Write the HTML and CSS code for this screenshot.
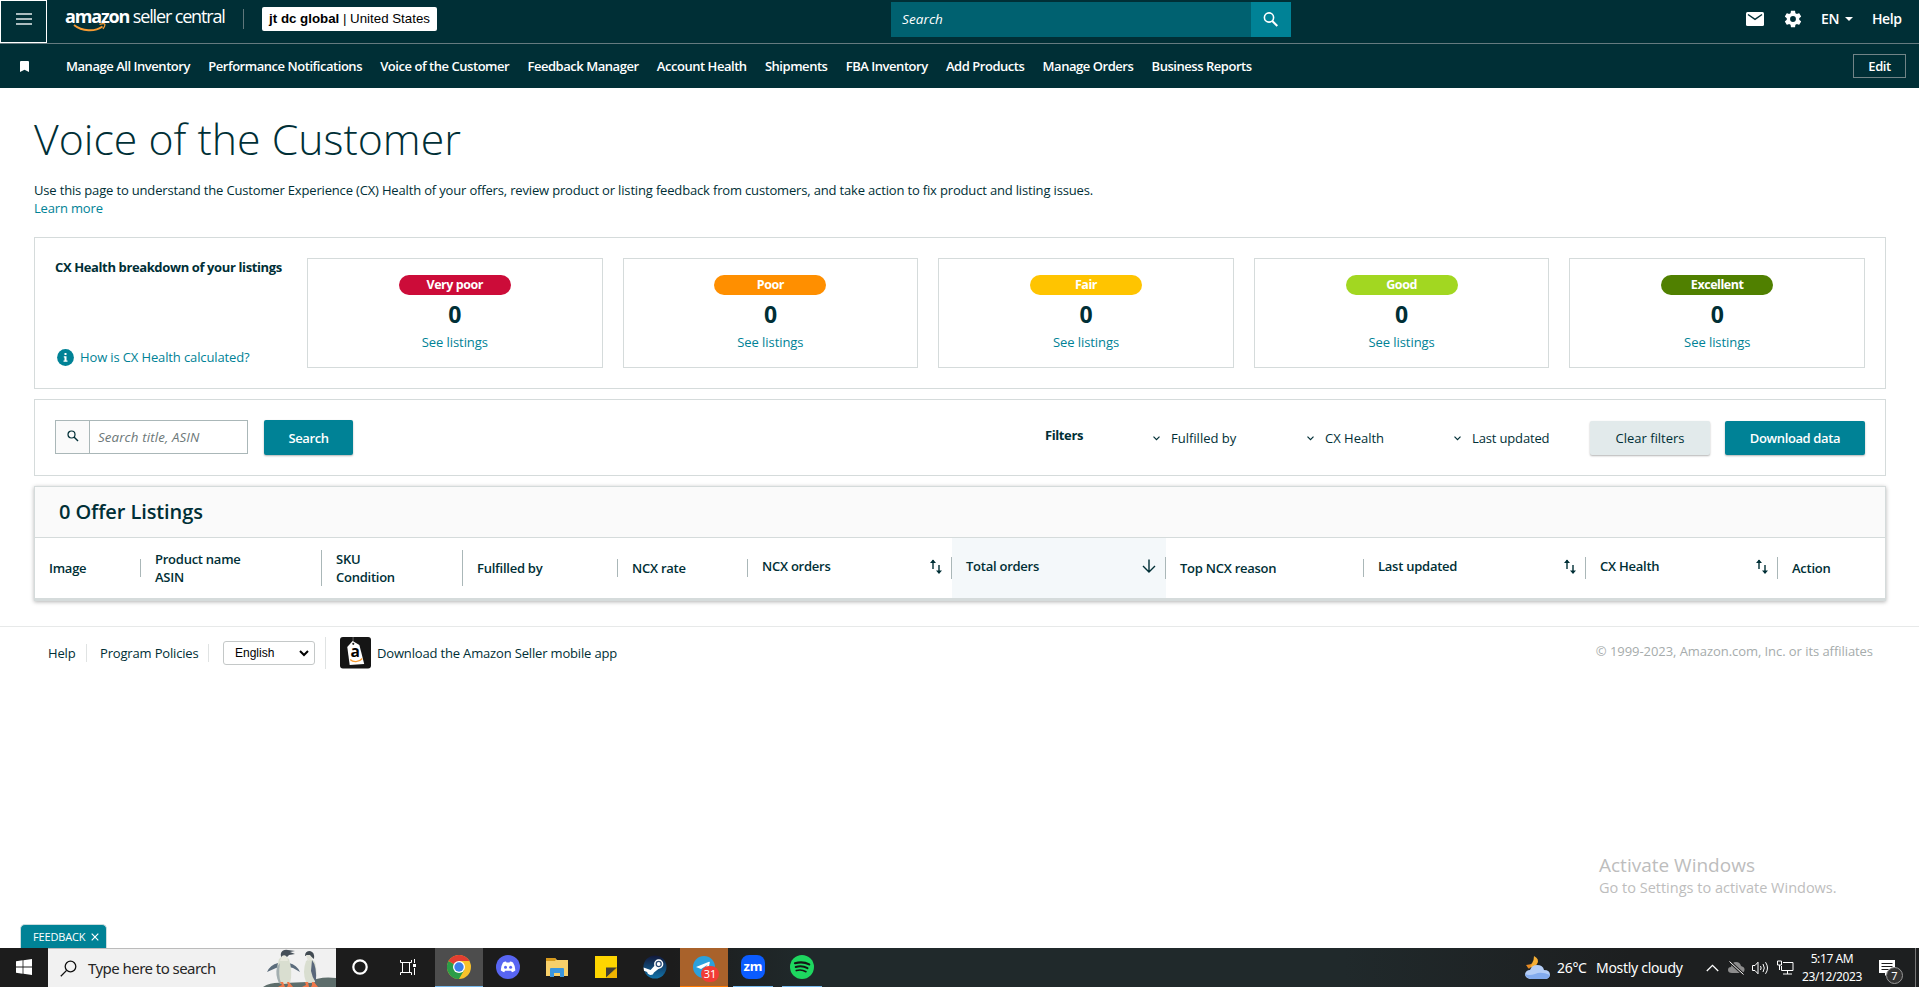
FILE: index.html
```html
<!DOCTYPE html>
<html lang="en">
<head>
    <meta charset="UTF-8">
    <meta name="viewport" content="width=device-width, initial-scale=1.0">
    <title>Voice of the Customer</title>
    <link rel="stylesheet" href="styles.css">
</head>
<body>

<header class="topbar">
    <button class="menu-btn" type="button" aria-label="Menu">
        <svg width="16" height="12" viewBox="0 0 16 12"><path d="M0 1h16M0 6h16M0 11h16" stroke="#e3eced" stroke-width="1.6"/></svg>
    </button>
    <a class="logo" href="#">
        <span class="logo-text"><b>amazon</b> <span>seller central</span></span>
        <svg class="smile" width="34" height="10" viewBox="0 0 34 10" fill="none" stroke="#f79c34">
            <path d="M1 2C9 8.500 22 9 29.500 3.500" stroke-width="1.900"/>
            <path d="M26.500 1.300c3-.8 5-.7 5.300 0s-.4 2.600-1.800 4.700" stroke-width="1.300"/>
        </svg>
    </a>
    <span class="top-sep"></span>
    <div class="store"><b>jt dc global</b> | United States</div>
    <form class="top-search">
        <div class="top-search-input">Search</div>
        <button type="button" aria-label="Search">
            <svg width="16" height="17" viewBox="0 0 16 17" fill="none" stroke="#fff"><circle cx="6" cy="6.500" r="4.600" stroke-width="1.600"/><path d="M9.300 10l5 5" stroke-width="2"/></svg>
        </button>
    </form>
    <div class="top-right">
        <svg class="mail" width="18" height="14" viewBox="0 0 18 14"><rect width="18" height="14" rx="1.500" fill="#fff"/><path d="M2 2.500l7 4.800 7-4.800" fill="none" stroke="#002f36" stroke-width="1.500"/></svg>
        <svg class="gear" width="20" height="20" viewBox="0 0 24 24" fill="#fff"><path d="M19.430 12.980c.04-.32.07-.64.07-.98s-.03-.66-.07-.98l2.110-1.650c.19-.15.24-.42.12-.64l-2-3.460c-.12-.22-.39-.3-.61-.22l-2.490 1c-.52-.4-1.080-.73-1.690-.98l-.38-2.650C14.460 2.180 14.250 2 14 2h-4c-.25 0-.46.18-.49.42l-.38 2.650c-.61.25-1.170.59-1.690.98l-2.490-1c-.23-.09-.49 0-.61.22l-2 3.460c-.13.22-.07.49.12.64l2.110 1.650c-.04.32-.07.65-.07.98s.03.66.07.98l-2.110 1.650c-.19.15-.24.42-.12.64l2 3.460c.12.22.39.3.61.22l2.490-1c.52.4 1.080.73 1.690.98l.38 2.650c.03.24.24.42.49.42h4c.25 0 .46-.18.49-.42l.38-2.650c.61-.25 1.170-.59 1.690-.98l2.490 1c.23.09.49 0 .61-.22l2-3.460c.12-.22.07-.49-.12-.64l-2.110-1.650zM12 15.500a3.500 3.500 0 1 1 0-7 3.500 3.500 0 0 1 0 7z"/></svg>
        <span class="lang">EN</span>
        <span class="caret"></span>
        <span class="help">Help</span>
    </div>
</header>

<nav class="navbar">
    <svg class="bookmark" width="9" height="11" viewBox="0 0 9 11"><path d="M0 1q0-1 1-1h7q1 0 1 1v10L4.500 8.800 0 11z" fill="#fff"/></svg>
    <a href="#">Manage All Inventory</a>
    <a href="#">Performance Notifications</a>
    <a href="#">Voice of the Customer</a>
    <a href="#">Feedback Manager</a>
    <a href="#">Account Health</a>
    <a href="#">Shipments</a>
    <a href="#">FBA Inventory</a>
    <a href="#">Add Products</a>
    <a href="#">Manage Orders</a>
    <a href="#">Business Reports</a>
    <button class="edit-btn" type="button">Edit</button>
</nav>

<main>
    <h1>Voice of the Customer</h1>
    <p class="intro">Use this page to understand the Customer Experience (CX) Health of your offers, review product or listing feedback from customers, and take action to fix product and listing issues.<br><a href="#">Learn more</a></p>

    <section class="panel health">
        <div class="health-info">
            <h4>CX Health breakdown of your listings</h4>
            <a href="#" class="how">
                <svg width="17" height="17" viewBox="0 0 17 17"><circle cx="8.500" cy="8.500" r="8.400" fill="#008296"/><path d="M7.500 4h2v2h-2zM6.800 7.200h2.700v4.300h1v1.200H6.500v-1.200h1V8.400h-.7z" fill="#fff"/></svg>
                How is CX Health calculated?
            </a>
        </div>
        <div class="cards">
            <div class="card"><span class="pill very-poor">Very poor</span><strong>0</strong><a href="#">See listings</a></div>
            <div class="card"><span class="pill poor">Poor</span><strong>0</strong><a href="#">See listings</a></div>
            <div class="card"><span class="pill fair">Fair</span><strong>0</strong><a href="#">See listings</a></div>
            <div class="card"><span class="pill good">Good</span><strong>0</strong><a href="#">See listings</a></div>
            <div class="card"><span class="pill excellent">Excellent</span><strong>0</strong><a href="#">See listings</a></div>
        </div>
    </section>

    <section class="panel filters">
        <div class="search-box">
            <span class="search-icon"><svg width="12" height="12" viewBox="0 0 12 12" fill="none" stroke="#002f36"><circle cx="4.500" cy="4.500" r="3.500" stroke-width="1.200"/><path d="M7 7l4 4" stroke-width="1.400"/></svg></span>
            <span class="search-text">Search title, ASIN</span>
        </div>
        <button class="btn search-btn" type="button">Search</button>
        <b class="filters-label">Filters</b>
        <span class="filter f1"><svg width="7" height="5" viewBox="0 0 7 5"><path d="M.5.700l3 3 3-3" fill="none" stroke="#002f36" stroke-width="1.200"/></svg>Fulfilled by</span>
        <span class="filter f2"><svg width="7" height="5" viewBox="0 0 7 5"><path d="M.5.700l3 3 3-3" fill="none" stroke="#002f36" stroke-width="1.200"/></svg>CX Health</span>
        <span class="filter f3"><svg width="7" height="5" viewBox="0 0 7 5"><path d="M.5.700l3 3 3-3" fill="none" stroke="#002f36" stroke-width="1.200"/></svg>Last updated</span>
        <button class="btn clear-btn" type="button">Clear filters</button>
        <button class="btn download-btn" type="button">Download data</button>
    </section>

    <section class="listings">
        <h2>0 Offer Listings</h2>
        <div class="columns">
            <div class="col"><span>Image</span></div>
            <div class="col"><span>Product name<br>ASIN</span></div>
            <div class="col"><span>SKU<br>Condition</span></div>
            <div class="col"><span>Fulfilled by</span></div>
            <div class="col"><span>NCX rate</span></div>
            <div class="col sort"><span>NCX orders<svg width="12" height="16" viewBox="0 0 12 16"><path d="M3 1v9M9 6v8" stroke="#002f36" stroke-width="1.400"/><path d="M0 4l3-3.500L6 4zM6 11.500l3 3.500 3-3.500z" fill="#002f36"/></svg></span></div>
            <div class="col sort active"><span>Total orders<svg width="14" height="14" viewBox="0 0 14 14"><path d="M7 .5v12M1 7l6 6 6-6" fill="none" stroke="#002f36" stroke-width="1.400"/></svg></span></div>
            <div class="col"><span>Top NCX reason</span></div>
            <div class="col sort"><span>Last updated<svg width="12" height="16" viewBox="0 0 12 16"><path d="M3 1v9M9 6v8" stroke="#002f36" stroke-width="1.400"/><path d="M0 4l3-3.500L6 4zM6 11.500l3 3.500 3-3.500z" fill="#002f36"/></svg></span></div>
            <div class="col sort"><span>CX Health<svg width="12" height="16" viewBox="0 0 12 16"><path d="M3 1v9M9 6v8" stroke="#002f36" stroke-width="1.400"/><path d="M0 4l3-3.500L6 4zM6 11.500l3 3.500 3-3.500z" fill="#002f36"/></svg></span></div>
            <div class="col last"><span>Action</span></div>
        </div>
    </section>
</main>

<footer>
    <a class="foot-help" href="#">Help</a>
    <a class="foot-policies" href="#">Program Policies</a>
    <div class="language">English<svg width="10" height="7" viewBox="0 0 10 7"><path d="M1 1l4 4 4-4" fill="none" stroke="#000" stroke-width="2"/></svg></div>
    <a class="app" href="#">
        <svg width="31" height="32" viewBox="0 0 32 32" preserveAspectRatio="none">
            <rect width="32" height="31.500" rx="3" fill="#151515"/>
            <path d="M13.500 0v6" stroke="#777" stroke-width=".8"/>
            <path d="M7.500 10l5.500-6 7 4 5 19-15 1z" fill="#fff"/>
            <circle cx="13.700" cy="6.800" r="1.100" fill="#222"/>
            <text x="10.800" y="20.500" class="tag-letter">a</text>
            <path d="M10.500 22.500c3 3 9 3 12.500-1" fill="none" stroke="#f79c34" stroke-width="1.400"/>
        </svg>
        Download the Amazon Seller mobile app
    </a>
    <span class="copyright">© 1999-2023, Amazon.com, Inc. or its affiliates</span>
</footer>

<div class="activate">
    <div class="activate-title">Activate Windows</div>
    <div class="activate-text">Go to Settings to activate Windows.</div>
</div>

<div class="feedback">FEEDBACK <svg width="8" height="8" viewBox="0 0 8 8"><path d="M.7.700l6.600 6.600M7.300.700L.7 7.300" stroke="#fff" stroke-width="1.200"/></svg></div>

<div class="taskbar">
    <span class="task start"><svg width="16" height="16" viewBox="0 0 16 16" fill="#fff"><path d="M0 2.200L6.600 1.300v6.300H0zM7.400 1.200L16 0v7.600H7.400zM0 8.400h6.600v6.300L0 13.800zM7.400 8.400H16V16l-8.600-1.200z"/></svg></span>
    <div class="win-search">
        <svg class="lens" width="17" height="17" viewBox="0 0 17 17" fill="none" stroke="#111" stroke-width="1.300"><circle cx="10.500" cy="6.500" r="5.300"/><path d="M6.600 10.400L.8 16.200"/></svg>
        <span>Type here to search</span>
        <svg class="penguins" width="73" height="38" viewBox="0 0 73 38">
            <path d="M0 38q8-5 20-4l25-1q12-6 28-4v9z" fill="#5d6d6b"/>
            <path d="M15 14q-8 2-11 9l9-4 3-1zM26 14q8 2 11 9l-7-4-4-1z" fill="#5b6c7c"/>
            <path d="M16 10q4-5 10 0 4 14 1 24-7 2-11 0-4-12 0-24z" fill="#d9ded0"/>
            <path d="M14 18q-2 8 2 16h2q-3-8-1-20z" fill="#a3aeb0"/>
            <path d="M18 4q2-4 7-3l7 1-5 1 5 2-6 1q-2 3-6 3-3-1-2-5z" fill="#454f58"/>
            <path d="M19 7q3-2 5 1l1 4h-8z" fill="#e8e9de"/>
            <path d="M43 12q5-4 9 1 3 11 0 20-6 2-9 0-4-10 0-21z" fill="#d9ded0"/>
            <path d="M49 11q5 6 4 23-4-6-5-12z" fill="#59677a"/>
            <path d="M42 7q0-5 5-5 5 1 4 8l-5-4z" fill="#424b53"/>
            <path d="M43 6h4l3 4-5 2z" fill="#e3e4da"/>
            <path d="M17 33l2 3-4 2h7l-2-5zM24 33l1 3-1 2h6l-4-5zM42 33l1 3-4 2h7l-1-5zM49 33v3l-1 2h7l-4-5z" fill="#f0784a"/>
        </svg>
    </div>
    <span class="task"><svg width="18" height="18" viewBox="0 0 18 18"><circle cx="9" cy="9" r="6.700" fill="none" stroke="#fff" stroke-width="2.200"/></svg></span>
    <span class="task view"><svg width="17" height="17" viewBox="0 0 17 17" fill="none" stroke="#fff"><path d="M.5 1v2.500h11V1M.5 16v-2.500h11V16M2.500 3.500v10M9.500 3.500v10M14.500 0v4M14.500 9v7"/><path d="M13 5h3v3h-3z" fill="#fff" stroke="none"/></svg></span>
    <span class="task chrome">
        <svg width="24" height="24" viewBox="0 0 24 24"><circle cx="12" cy="12" r="12" fill="#f9c22b"/><path d="M12 12L1.600 6A12 12 0 0 0 12 24l5.200-9z" fill="#2b9d48"/><path d="M12 12L1.600 6A12 12 0 0 1 22.400 6H12z" fill="#e23e31"/><circle cx="12" cy="12" r="6" fill="#fff"/><circle cx="12" cy="12" r="4.700" fill="#3d7eea"/></svg>
    </span>
    <span class="task"><svg width="24" height="24" viewBox="0 0 24 24"><circle cx="12" cy="12" r="12" fill="#5865f2"/><path d="M7 7.500q1.500-1 3-1l.5.900h3l.5-.9q1.500 0 3 1 2.500 4 2.300 8-1.500 1.300-3.300 1.700l-.9-1.500h-6l-.9 1.500q-1.800-.4-3.300-1.700-.2-4 2.100-8z" fill="#fff"/><circle cx="9.500" cy="12.200" r="1.500" fill="#5865f2"/><circle cx="14.600" cy="12.200" r="1.500" fill="#5865f2"/></svg></span>
    <span class="task"><svg width="22" height="19" viewBox="0 0 22 19"><path d="M0 0h9l2 2h11v16H0z" fill="#f8d06a"/><path d="M0 0h9l1 1.500-1 1.500H0z" fill="#d79a1c"/><path d="M4 19v-8q0-1 1-1h12q1 0 1 1v8h-4v-4H8v4z" fill="#3b96dd"/></svg></span>
    <span class="task"><svg width="22" height="22" viewBox="0 0 22 22"><path d="M0 0h22v11.500L11.500 22H0z" fill="#fed500"/><path d="M11 11.500h11L11 21.500z" fill="#423e35"/><path d="M22 11.500V22H11z" fill="#f0b400"/></svg></span>
    <span class="task"><svg width="24" height="24" viewBox="0 0 24 24"><defs><linearGradient id="steam" x1="0" y1="0" x2="0" y2="1"><stop offset="0" stop-color="#12183a"/><stop offset="1" stop-color="#1272a8"/></linearGradient></defs><circle cx="12" cy="12" r="11.500" fill="url(#steam)"/><path d="M.6 12.500l7 2.600 5-5.600 4 3.500-5.600 4.400q-1 3-4.400 2.400-2.200-.6-2.500-2.800L1 15.700z" fill="#fff"/><circle cx="15.700" cy="9" r="3.900" fill="#284a75" stroke="#fff" stroke-width="1.500"/><circle cx="15.700" cy="9" r="1.900" fill="#fff"/></svg></span>
    <span class="task telegram">
        <svg width="22" height="22" viewBox="0 0 22 22"><circle cx="11" cy="11" r="11" fill="#2ba0dc"/><path d="M3 11l13-5.200q1-.2.800.8L14.500 17 10 13.800l5-5.300-7 4.600z" fill="#fff"/></svg>
        <span class="badge">31</span>
    </span>
    <span class="task zoom"><span class="zoom-icon">zm</span></span>
    <span class="task spotify"><svg width="24" height="24" viewBox="0 0 24 24" fill="none" stroke="#151515" stroke-linecap="round"><circle cx="12" cy="12" r="12" fill="#1ed760" stroke="none"/><path d="M5 8.200q8-2.200 14.200 1.200" stroke-width="2.200"/><path d="M5.700 12q6.500-1.800 11.800 1.200" stroke-width="1.900"/><path d="M6.300 15.600q5.200-1.500 9.700 1.100" stroke-width="1.600"/></svg></span>
    <div class="tray">
        <svg class="weather" width="25" height="24" viewBox="0 0 25 24"><path d="M9 0q6 3 3 8-3 5-10 3Q9 8 9 0z" fill="#f5ae35"/><path d="M1 9l6-1-3 5z" fill="#e88b24"/><path d="M5 23q-5-1-5-5 1-4 5-4 2-5 7-5 6 0 7 5 6 0 6 5-1 4-5 4z" fill="#b4cdf6"/><path d="M3 22q-3-2-3-4 4 2 10 0 6-3 15 1-1 4-5 4H6z" fill="#83abed"/></svg>
        <span class="temp">26°C</span>
        <span class="sky">Mostly cloudy</span>
        <svg class="up" width="13" height="8" viewBox="0 0 13 8"><path d="M.8 7L6.500 1.300 12.200 7" fill="none" stroke="#fff" stroke-width="1.300"/></svg>
        <svg class="cloud" width="17" height="14" viewBox="0 0 17 14"><path d="M4 12q-4 0-4-3 0-3 3-3 1-5 5-5 4 0 5 4 4 1 3.500 4-.5 3-3.500 3z" fill="#8c8c8c"/><path d="M1.500.5l14 13" stroke="#1d1d1d" stroke-width="3"/><path d="M1.500.5l14 13" stroke="#fff"/></svg>
        <svg class="sound" width="17" height="14" viewBox="0 0 17 14" fill="none" stroke="#fff"><path d="M.5 4.500h2.500l3-3.300v11.600l-3-3.300H.5zM8.500 5q1.300 2 0 4M11 3q2.600 4 0 8M13.500 1.200q4 5.800 0 11.600"/></svg>
        <svg class="network" width="17" height="15" viewBox="0 0 17 15" fill="none" stroke="#fff"><path d="M6 2.500h10v8H4.500V6M10.500 10.500v3.500M6 14h9M.5 1h4v4h-4zM2.500 5v5"/></svg>
        <div class="clock">5:17 AM<br>23/12/2023</div>
        <div class="notes">
            <svg width="16" height="16" viewBox="0 0 16 16"><path d="M0 0h16v13H9l-3 3v-3H0z" fill="#fff"/><path d="M2.500 3.500h11M2.500 6.500h11M2.500 9.500h7" stroke="#1d1d1d"/></svg>
            <span class="notes-count">7</span>
        </div>
        <span class="desktop-edge"></span>
    </div>
</div>

</body>
</html>
```
FILE: styles.css
```css
* {
    box-sizing: border-box;
}

body {
    margin: 0;
    height: 987px;
    display: flex;
    flex-direction: column;
    overflow: hidden;
    background-color: #fff;
    color: #002f36;
    font-family: "Open Sans", "Noto Sans", sans-serif;
    font-size: 13px;
    letter-spacing: -0.165px;
    line-height: 18px;
    white-space: nowrap;
}

a {
    color: #008296;
    text-decoration: none;
}

button {
    font: inherit;
    letter-spacing: inherit;
    padding: 0;
    cursor: pointer;
}

svg {
    display: block;
    flex: none;
}

/* top bar */
.topbar {
    display: flex;
    flex: none;
    align-items: flex-start;
    height: 44px;
    background-color: #002f36;
    border-bottom: 1px solid #667b80;
    color: #fff;
}

.menu-btn {
    width: 47px;
    height: 43px;
    display: flex;
    align-items: center;
    justify-content: center;
    padding-bottom: 5px;
    background: none;
    border: 1px solid #fff;
}

.logo {
    margin: 4px 0 0 18px;
    width: 160px;
    height: 30px;
    color: #fff;
}

.logo-text {
    display: block;
    font-size: 18px;
    line-height: 24px;
    letter-spacing: -1.15px;
}

.smile {
    margin: -5px 0 0 8px;
}

.top-sep {
    width: 1px;
    height: 20px;
    margin: 9px 18px 0 18px;
    background-color: #5f777b;
}

.store {
    width: 175px;
    height: 24px;
    margin-top: 7px;
    background-color: #fff;
    border-radius: 2px;
    color: #000;
    font-family: "Liberation Sans", Arial, sans-serif;
    font-size: 13.3px;
    letter-spacing: 0;
    line-height: 24px;
    text-align: center;
}

.top-search {
    display: flex;
    width: 400px;
    height: 35px;
    margin: 2px 0 0 454px;
}

.top-search-input {
    flex: 1;
    padding-left: 11px;
    background-color: #006170;
    font-size: 13.5px;
    font-style: italic;
    letter-spacing: 0.1px;
    line-height: 34px;
}

.top-search button {
    width: 40px;
    display: flex;
    align-items: center;
    justify-content: center;
    background-color: #008296;
    border: none;
}

.top-right {
    display: flex;
    align-items: center;
    height: 38px;
    margin-left: auto;
    font-weight: 600;
    font-size: 14px;
    letter-spacing: -0.4px;
}

.gear {
    margin: 0 18px 0 19px;
}

.lang {
    width: 18px;
}

.caret {
    margin: 0 19px 0 6px;
    border: 4px solid transparent;
    border-top-color: #fff;
    border-bottom: none;
}

.help {
    width: 47px;
}

.navbar {
    display: flex;
    flex: none;
    align-items: center;
    height: 44px;
    padding: 0 13px 0 20px;
    background-color: #002f36;
    color: #fff;
    font-weight: 600;
    letter-spacing: -0.46px;
}

.navbar a {
    margin-right: 18.2px;
    color: #fff;
}

.bookmark {
    margin-right: 37px;
}

.edit-btn {
    width: 53px;
    height: 24px;
    margin-left: auto;
    background: none;
    border: 1px solid #728487;
    color: #fff;
}

/* page */
main {
    padding: 0 33px 0 34px;
}

h1 {
    margin: 21px 0 0;
    font-size: 42.8px;
    font-weight: 300;
    letter-spacing: 0;
    line-height: 60px;
}

.intro {
    margin: 12px 0 20px;
}

.panel {
    display: flex;
    border: 1px solid #d5dbdb;
    margin-bottom: 10px;
}

.health {
    height: 152px;
    padding: 20px;
}

.health-info {
    width: 252px;
    display: flex;
    flex-direction: column;
    justify-content: space-between;
    padding-bottom: 2px;
}

.health-info h4 {
    margin: 0;
    font-size: 13px;
    font-weight: 700;
    letter-spacing: -0.38px;
}

.how {
    display: flex;
    align-items: center;
    gap: 6px;
    margin-left: 2px;
    letter-spacing: -0.13px;
}

.cards {
    flex: 1;
    display: grid;
    grid-template-columns: repeat(5, 1fr);
    gap: 20px;
}

.card {
    display: flex;
    flex-direction: column;
    align-items: center;
    border: 1px solid #d5dbdb;
    padding-top: 16px;
}

.card strong {
    margin: 5px 0 5px;
    font-size: 23px;
    line-height: 28px;
}

.card a {
    letter-spacing: -0.07px;
}

.pill {
    width: 112px;
    height: 20px;
    border-radius: 10px;
    color: #fff;
    font-size: 12.5px;
    font-weight: 700;
    letter-spacing: -0.45px;
    line-height: 19px;
    text-align: center;
}

.very-poor { background-color: #cc0c39; }
.poor { background-color: #ff8f00; }
.fair { background-color: #ffc400; }
.good { background-color: #a2d721; }
.excellent { background-color: #508000; }

.filters {
    height: 77px;
    padding: 20px 20px 0 20px;
}

.search-box {
    display: flex;
    width: 193px;
    height: 34px;
    border: 1px solid #aab7b8;
}

.search-icon {
    width: 34px;
    padding: 9px 0 0 11px;
    background-color: #fafafa;
    border-right: 1px solid #aab7b8;
}

.search-text {
    padding-left: 8px;
    color: #6c7778;
    font-size: 13.3px;
    font-style: italic;
    letter-spacing: 0.13px;
    line-height: 33px;
}

.btn {
    height: 35px;
    border: none;
    border-radius: 2px;
    background-color: #008296;
    box-shadow: 0 1px 2px rgba(0, 0, 0, 0.3);
    color: #fff;
    font-weight: 600;
    letter-spacing: -0.38px;
}

.search-btn {
    width: 89px;
    margin-left: 16px;
}

.filters-label {
    margin: 6px 0 0 auto;
    width: 108px;
    letter-spacing: -0.4px;
}

.filter {
    display: flex;
    align-items: center;
    gap: 11px;
    height: 36px;
    letter-spacing: 0;
}

.f1 { width: 154px; }
.f2 { width: 147px; }
.f3 { width: 136px; letter-spacing: -0.15px; }

.clear-btn {
    width: 120px;
    margin: 0 15px 0 0;
    background-color: #e2eaeb;
    color: #002f36;
    font-weight: 400;
    letter-spacing: 0;
}

.clear-btn,
.download-btn {
    margin-top: 1px;
    height: 34px;
}

.download-btn {
    width: 140px;
}

/* listings table */
.listings {
    height: 115px;
    border: 1px solid #d5dbdb;
    border-bottom-width: 3px;
    box-shadow: 0 1px 4px rgba(0, 0, 0, 0.3);
}

.listings h2 {
    height: 51px;
    margin: 0;
    padding-left: 24px;
    background-color: #fafafa;
    border-bottom: 1px solid #d5dbdb;
    font-size: 20px;
    font-weight: 600;
    letter-spacing: -0.1px;
    line-height: 50px;
}

.columns {
    display: grid;
    grid-template-columns: 106px 181px 141px 155px 130px 204px 214px 198px 222px 192px 1fr;
    height: 60px;
    font-weight: 600;
    letter-spacing: -0.25px;
}

.col {
    display: flex;
    align-items: center;
    padding-left: 14px;
}

.col span {
    flex: 1;
    border-right: 1px solid #aab7b8;
}

.sort span {
    display: flex;
    justify-content: space-between;
    height: 22px;
    padding-right: 9px;
}

.sort svg {
    margin-top: 2px;
}

.active {
    background-color: #f4f8fa;
}

.last span {
    border: none;
}

/* footer */
footer {
    display: flex;
    flex: none;
    align-items: center;
    height: 54px;
    margin-top: 25px;
    padding: 0 46px 1px 48px;
    border-top: 1px solid #e7e9e9;
}

footer a {
    color: #002f36;
}

.foot-help {
    width: 39px;
    border-right: 1px solid #e0e3e3;
}

.foot-policies {
    width: 122px;
    padding-left: 13px;
    border-right: 1px solid #e0e3e3;
}

.language {
    display: flex;
    align-items: center;
    justify-content: space-between;
    width: 92px;
    height: 24px;
    margin: 0 10px 0 14px;
    padding: 0 5px 0 11px;
    border: 1px solid #c4c8c8;
    border-radius: 3px;
    color: #000;
    font-family: "Liberation Sans", Arial, sans-serif;
    font-size: 12px;
    letter-spacing: 0;
}

.app {
    display: flex;
    align-items: center;
    gap: 6px;
    padding-left: 14px;
    border-left: 1px solid #e0e3e3;
}

.tag-letter {
    font-family: "Open Sans", sans-serif;
    font-size: 16px;
    font-weight: 700;
}

.copyright {
    margin: 0 0 5px auto;
    color: #a6acac;
    font-weight: 500;
    letter-spacing: -0.06px;
}

.activate {
    margin: 173px 0 0 1599px;
    color: #bdbdbd;
    letter-spacing: 0;
}

.activate-title {
    font-size: 19px;
    line-height: 24px;
}

.activate-text {
    font-size: 14.5px;
    line-height: 21px;
}

.feedback {
    display: flex;
    align-items: center;
    gap: 6px;
    width: 87px;
    height: 24px;
    margin: auto 0 0 20px;
    padding-left: 12px;
    background-color: #008296;
    border: 1px solid #ccdcde;
    border-bottom: none;
    border-radius: 5px 5px 0 0;
    color: #fff;
    font-size: 11px;
    letter-spacing: -0.15px;
}

/* taskbar */
.taskbar {
    display: flex;
    flex: none;
    height: 39px;
    background: linear-gradient(90deg, #1c1c1c 35%, #20292b 42%, #20292b 70%, #1d1f20 85%);
    color: #fff;
    font-family: "Noto Sans", "Open Sans", sans-serif;
    letter-spacing: 0;
}

.task {
    display: flex;
    align-items: center;
    justify-content: center;
    width: 48px;
    margin-right: 1px;
    border-bottom: 1px solid transparent;
}

.start {
    margin: 0;
}

.win-search {
    display: flex;
    align-items: center;
    width: 288px;
    padding-left: 12px;
    background-color: #f1f1f1;
    border-top: 1px solid #bbb;
    color: #262626;
    font-size: 15px;
    letter-spacing: -0.55px;
}

.win-search span {
    margin-left: 11px;
}

.penguins {
    margin-left: auto;
}

.view {
    padding-right: 2px;
}

.chrome {
    margin-left: 1px;
    background-color: #4d4d4d;
    border-color: #76b9ed;
}

.telegram {
    position: relative;
    background-color: #a9622b;
    border-color: #ff7a00;
}

.badge {
    position: absolute;
    left: 21px;
    top: 18px;
    width: 18px;
    height: 16px;
    border-radius: 8px;
    background-color: #f23c34;
    font-size: 11px;
    line-height: 16px;
    text-align: center;
}

.zoom,
.spotify {
    width: 40px;
    margin: 0 5px 0 4px;
    border-color: #76b9ed;
}

.zoom-icon {
    width: 24px;
    height: 24px;
    border-radius: 8px;
    background-color: #0b5cff;
    font-size: 13px;
    font-weight: 700;
    line-height: 22px;
    text-align: center;
}

.tray {
    display: flex;
    align-items: center;
    margin-left: auto;
    font-size: 14px;
}

.temp {
    width: 39px;
    margin-left: 7px;
    letter-spacing: -0.3px;
}

.sky {
    width: 110px;
    letter-spacing: -0.3px;
}

.cloud { margin-left: 9px; }
.sound { margin-left: 7px; }
.network { margin-left: 8px; }

.clock {
    width: 60px;
    margin-left: 8px;
    font-size: 12px;
    letter-spacing: -0.4px;
    text-align: center;
}

.notes {
    position: relative;
    margin-left: 17px;
}

.notes-count {
    position: absolute;
    left: 7px;
    top: 7px;
    width: 17px;
    height: 17px;
    border: 1px solid #999;
    border-radius: 50%;
    background-color: #333;
    font-size: 11px;
    line-height: 15px;
    text-align: center;
}

.desktop-edge {
    width: 4px;
    height: 39px;
    margin-left: 20px;
    border-left: 1px solid #777;
}
```
